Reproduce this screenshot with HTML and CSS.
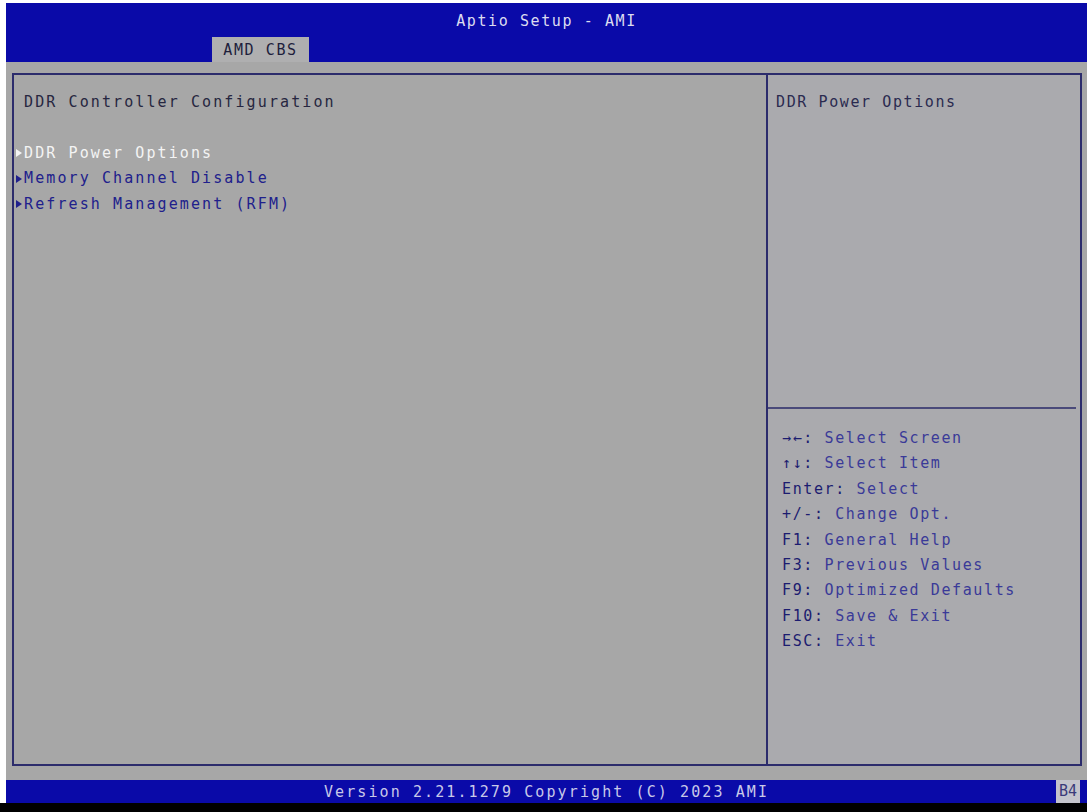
FILE: index.html
```html
<!DOCTYPE html>
<html>
<head>
  <title>Aptio Setup - AMI</title>
  <link rel="stylesheet" href="styles.css">
</head>
<body>
  <div class="screen">
    <div class="header">
      <div class="title">Aptio Setup - AMI</div>
      <div class="tabs">
        <div class="tab">AMD CBS</div>
      </div>
    </div>

    <div class="main">
      <div class="frame">
        <div class="left-panel">
          <div class="row heading">DDR Controller Configuration</div>
          <div class="row"></div>
          <div class="row item selected"><span class="arrow"></span>DDR Power Options</div>
          <div class="row item"><span class="arrow"></span>Memory Channel Disable</div>
          <div class="row item"><span class="arrow"></span>Refresh Management (RFM)</div>
        </div>

        <div class="right-panel">
          <div class="help-text">
            <div class="row">DDR Power Options</div>
          </div>
          <div class="keys">
            <div class="row"><span class="key">&rarr;&larr;:</span> Select Screen</div>
            <div class="row"><span class="key">&uarr;&darr;:</span> Select Item</div>
            <div class="row"><span class="key">Enter:</span> Select</div>
            <div class="row"><span class="key">+/-:</span> Change Opt.</div>
            <div class="row"><span class="key">F1:</span> General Help</div>
            <div class="row"><span class="key">F3:</span> Previous Values</div>
            <div class="row"><span class="key">F9:</span> Optimized Defaults</div>
            <div class="row"><span class="key">F10:</span> Save &amp; Exit</div>
            <div class="row"><span class="key">ESC:</span> Exit</div>
          </div>
        </div>
      </div>
    </div>

    <div class="footer">
      <div class="version">Version 2.21.1279 Copyright (C) 2023 AMI</div>
      <div class="post-code">B4</div>
    </div>
  </div>
  <div class="bottom-bar"></div>
</body>
</html>
```

FILE: styles.css
```css
body {
  margin: 0;
  background-color: #ffffff;
  font-family: "DejaVu Sans Mono", "Liberation Mono", monospace;
  font-size: 15px;
  letter-spacing: 1.6px;
}
.screen {
  margin: 3px 0 0 6px;
  height: 800px;
  display: flex;
  flex-direction: column;
}
.header {
  height: 59px;
  background-color: #0a0aa8;
  display: flex;
  flex-direction: column;
  justify-content: space-between;
}
.title {
  color: #dcdcf0;
  text-align: center;
  padding: 9px 0 0 0;
  line-height: 18px;
}
.tabs {
  display: flex;
  padding-left: 206px;
}
.tab {
  width: 97px;
  height: 25px;
  line-height: 27px;
  text-align: center;
  background-color: #afafb0;
  color: #1e1e3c;
}
.main {
  height: 718px;
  background-color: #a7a7a7;
  padding: 11px 5px 14px 6px;
  box-sizing: border-box;
}
.frame {
  height: 100%;
  border: 2px solid #2c2c6c;
  box-sizing: border-box;
  display: flex;
}
.row {
  height: 25.4px;
  line-height: 25.4px;
  white-space: nowrap;
}
.left-panel {
  width: 754px;
  border-right: 2px solid #2c2c6c;
  padding: 15px 0 0 10px;
  box-sizing: border-box;
  letter-spacing: 2.1px;
}
.heading {
  color: #262640;
}
.item {
  display: flex;
  align-items: center;
  color: #20208c;
}
.arrow {
  width: 0;
  height: 0;
  border-left: 6px solid #20208c;
  border-top: 4px solid transparent;
  border-bottom: 4px solid transparent;
  margin-left: -8px;
  margin-right: 2px;
}
.selected {
  color: #f4f4f4;
}
.selected .arrow {
  border-left-color: #f4f4f4;
}
.right-panel {
  flex: 1;
  display: flex;
  flex-direction: column;
  background-color: #aaaaae;
}
.help-text {
  height: 334px;
  padding: 15px 0 0 8px;
  box-sizing: border-box;
  color: #2a2a50;
  border-bottom: 2px solid #4a4a7a;
  margin-right: 4px;
}
.keys {
  padding: 17px 0 0 14px;
  color: #3a3a98;
}
.key {
  color: #1c1c70;
}
.footer {
  height: 23px;
  background-color: #0a0aa8;
  display: flex;
  align-items: center;
  position: relative;
}
.version {
  flex: 1;
  text-align: center;
  color: #c8c8e8;
  letter-spacing: 2.1px;
}
.post-code {
  position: absolute;
  right: 7px;
  top: 0;
  height: 23px;
  line-height: 23px;
  padding: 0 3px;
  letter-spacing: 0;
  background-color: #c4c4cc;
  color: #3a3a7a;
}
.bottom-bar {
  height: 9px;
  background-color: #000000;
}
```
